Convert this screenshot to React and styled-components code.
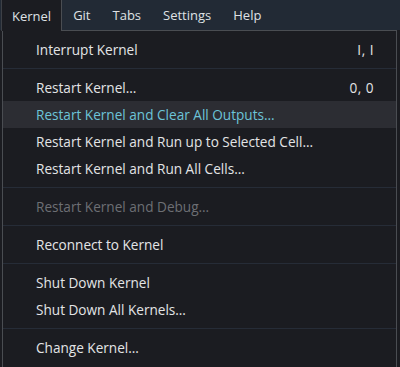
import React from 'react';
import styled, { createGlobalStyle } from 'styled-components';

const GlobalStyle = createGlobalStyle`
	html, body {
		margin: 0;
		padding: 0;
		background: #1b1c21;
	}
	body {
		font-family: 'Open Sans', 'Liberation Sans', sans-serif;
		-webkit-font-smoothing: antialiased;
	}
`;

const menuItems = [
	{ label: 'Kernel', active: true },
	{ label: 'Git' },
	{ label: 'Tabs' },
	{ label: 'Settings' },
	{ label: 'Help' },
];

const groups = [
	[{ label: 'Interrupt Kernel', shortcut: 'I, I' }],
	[
		{ label: 'Restart Kernel…', shortcut: '0, 0' },
		{ label: 'Restart Kernel and Clear All Outputs…', hovered: true },
		{ label: 'Restart Kernel and Run up to Selected Cell…' },
		{ label: 'Restart Kernel and Run All Cells…' },
	],
	[{ label: 'Restart Kernel and Debug…', disabled: true }],
	[{ label: 'Reconnect to Kernel' }],
	[{ label: 'Shut Down Kernel' }, { label: 'Shut Down All Kernels…' }],
	[{ label: 'Change Kernel…' }],
];

const App = () => {
	return (
		<Page>
			<GlobalStyle />
			<MenuBar>
				{menuItems.map((item) => (
					<BarItem key={item.label} $active={item.active}>
						{item.label}
					</BarItem>
				))}
			</MenuBar>
			<Menu>
				{groups.map((group, gi) => (
					<React.Fragment key={gi}>
						{gi > 0 && <Separator />}
						{group.map((item) => (
							<Row key={item.label} $hovered={item.hovered} $disabled={item.disabled}>
								<Label>{item.label}</Label>
								{item.shortcut && <Shortcut>{item.shortcut}</Shortcut>}
							</Row>
						))}
					</React.Fragment>
				))}
			</Menu>
		</Page>
	);
};

const Page = styled.div`
	width: 400px;
	height: 367px;
	overflow: hidden;
	background: #1b1c21;
	display: flex;
	flex-direction: column;
`;

const MenuBar = styled.div`
	display: flex;
	align-items: stretch;
	height: 30px;
	padding-left: 1px;
	background: #222a35;
	box-sizing: border-box;
`;

const BarItem = styled.div`
	display: flex;
	align-items: center;
	padding: 0 10px;
	font-size: 13px;
	font-weight: 500;
	color: #dfe1e4;
	background: ${(p) => (p.$active ? '#1b1c21' : 'transparent')};
	border-left: 1px solid ${(p) => (p.$active ? '#3d4046' : 'transparent')};
	border-right: 1px solid ${(p) => (p.$active ? '#4a4d52' : 'transparent')};
	margin-bottom: ${(p) => (p.$active ? '-1px' : '0')};
	position: relative;
	z-index: 1;
`;

const Menu = styled.div`
	flex: 1;
	margin-left: 2px;
	width: 395px;
	box-sizing: border-box;
	border: 1px solid #4a4d52;
	border-bottom: none;
	background: #1b1c21;
	padding-top: 5px;
	display: flex;
	flex-direction: column;
`;

const Row = styled.div`
	display: flex;
	align-items: center;
	justify-content: space-between;
	height: 27px;
	flex-shrink: 0;
	padding: 0 22px 0 33px;
	font-size: 13.6px;
	font-weight: 500;
	color: ${(p) => (p.$disabled ? '#6d6f74' : p.$hovered ? '#6cc4d8' : '#e3e4e6')};
	background: ${(p) => (p.$hovered ? '#2c2d33' : 'transparent')};
`;

const Label = styled.span`
	white-space: nowrap;
`;

const Shortcut = styled.span`
	white-space: nowrap;
	letter-spacing: 0.5px;
`;

const Separator = styled.div`
	flex-shrink: 0;
	height: 1px;
	margin: 5px 0;
	background: #262c37;
`;

export default App;
